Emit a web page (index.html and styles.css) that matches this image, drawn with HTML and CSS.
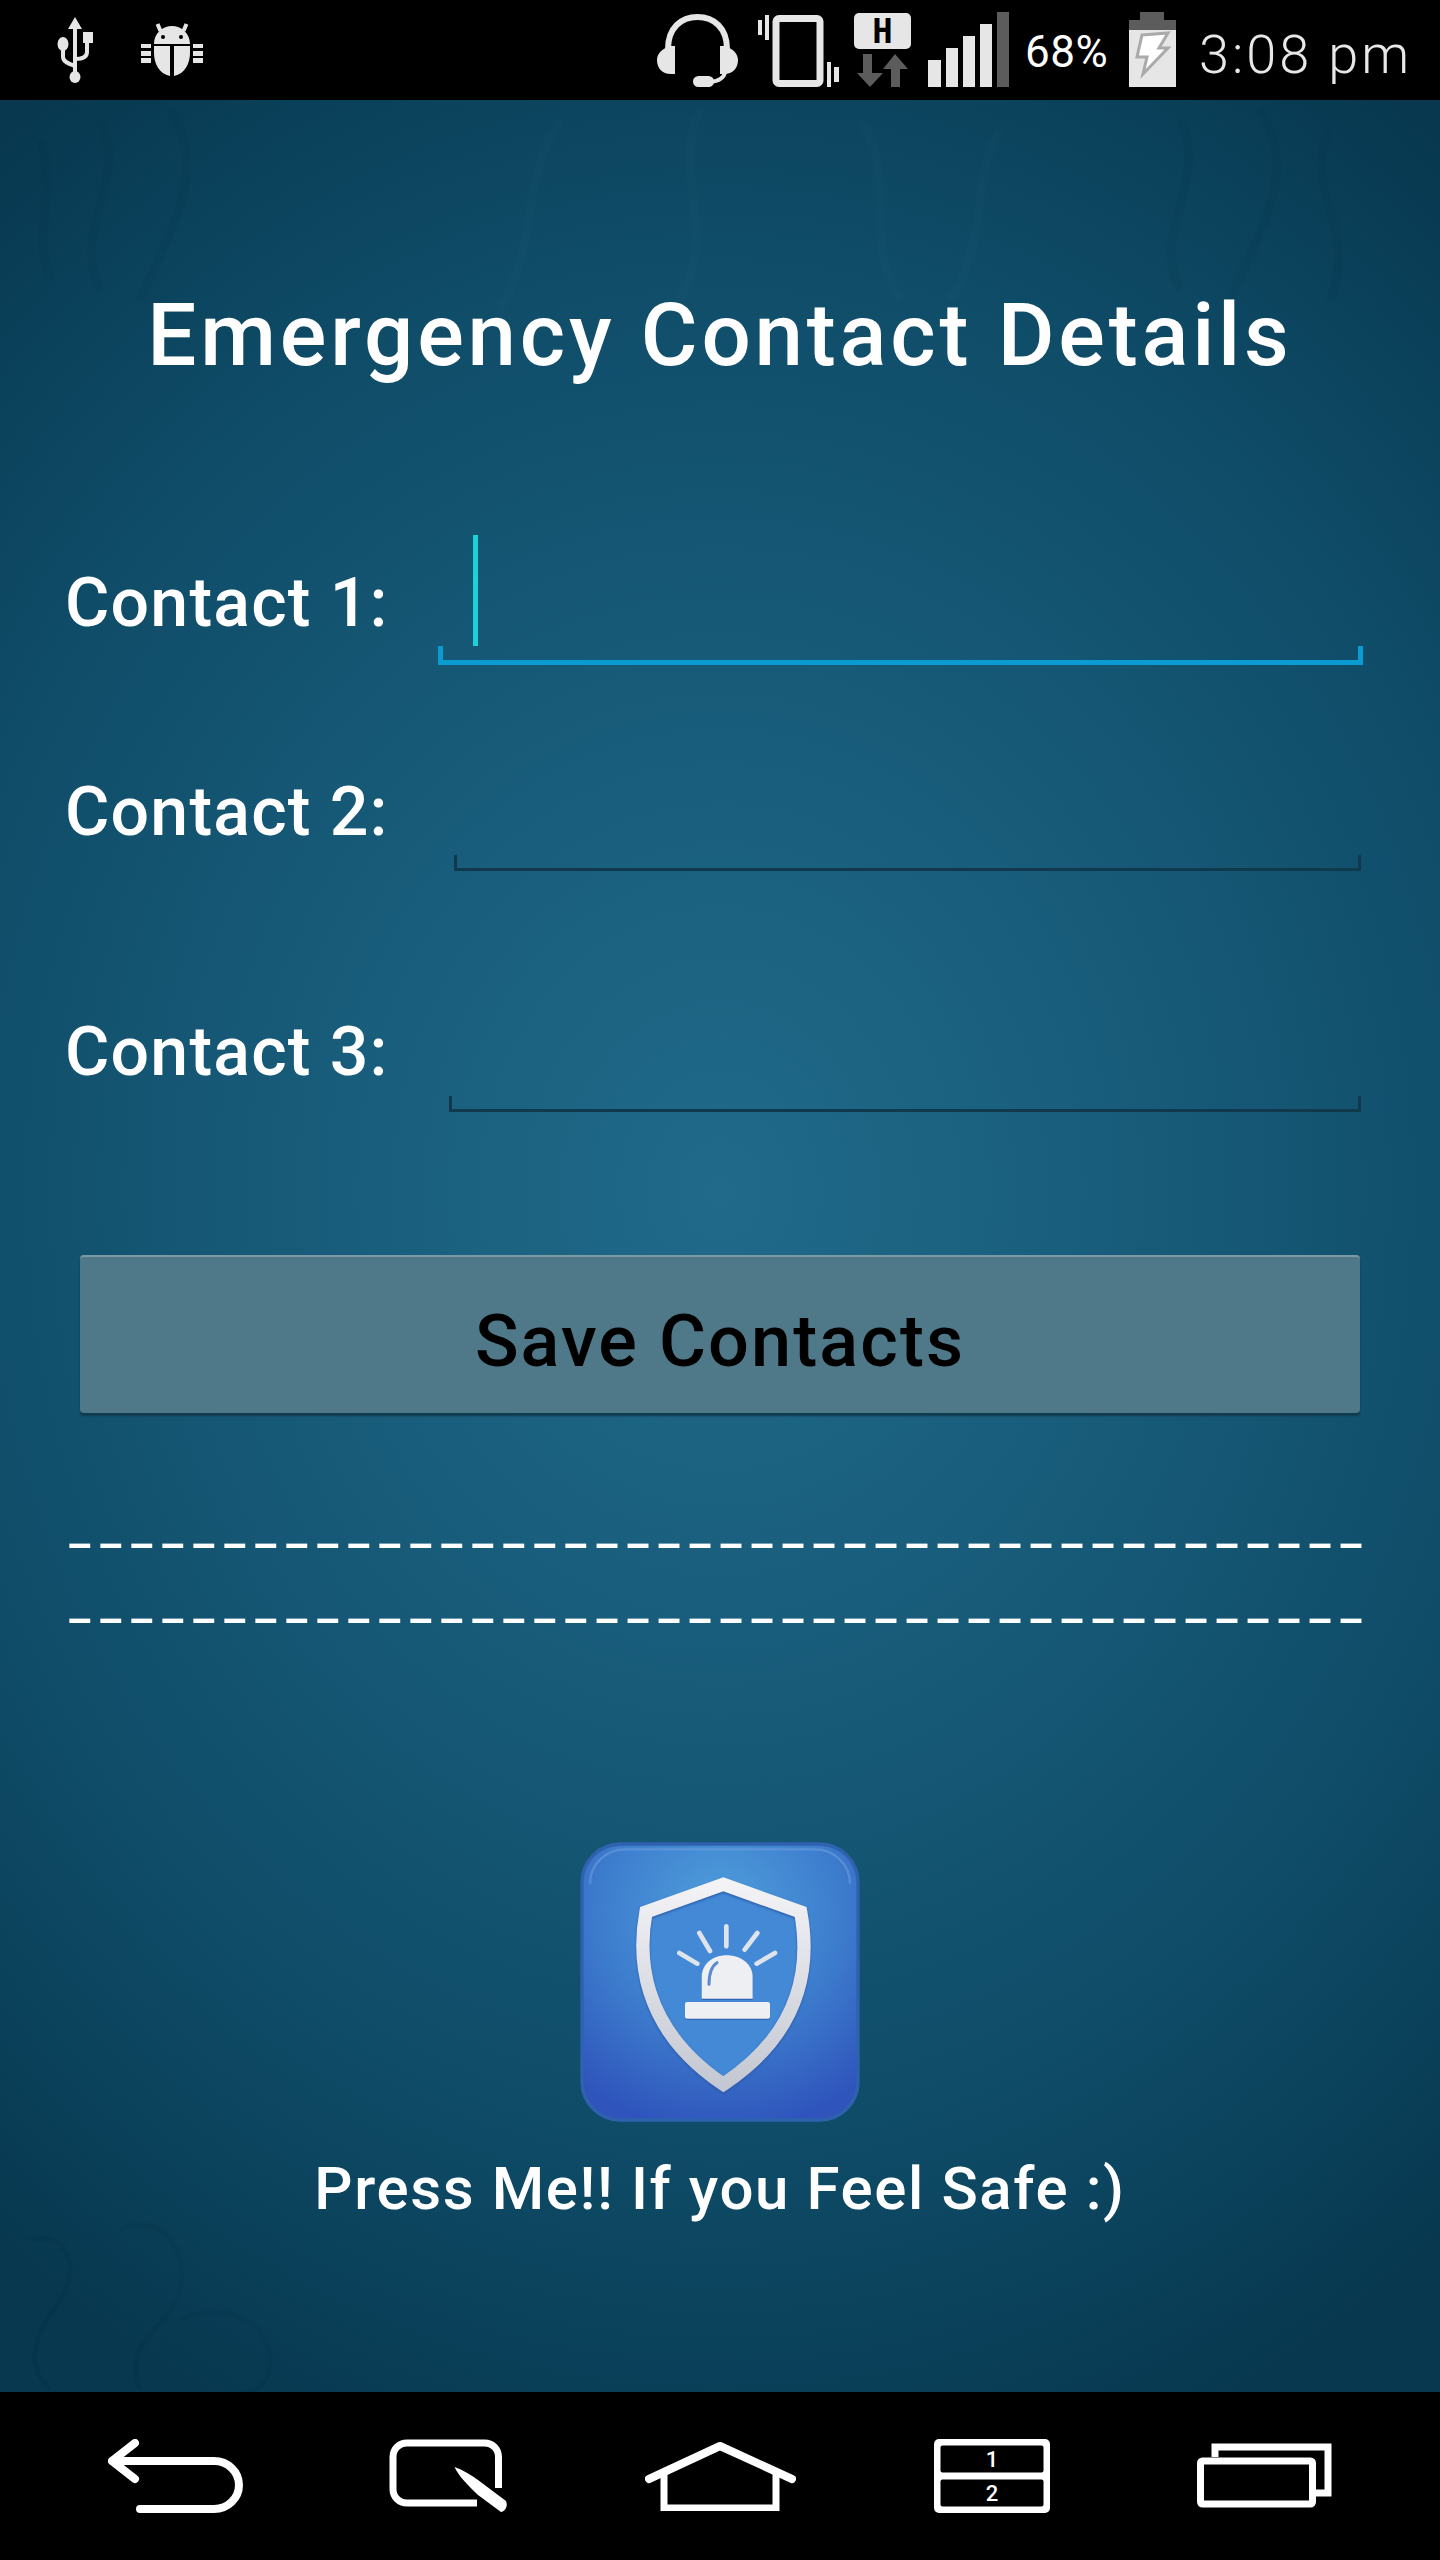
FILE: index.html
```html
<!DOCTYPE html>
<html lang="en">
<head>
<meta charset="utf-8">
<title>Emergency Contact Details</title>
<link rel="stylesheet" href="styles.css">
</head>
<body>
<div class="phone">
  <header class="status">
    <svg class="usb" viewBox="0 0 36 66"><path class="fill-l" d="M18 0l7 12h-5v44h-4V12h-5z"/><ellipse class="fill-l" cx="18" cy="60" rx="5.5" ry="6"/><ellipse class="fill-l" cx="6" cy="27" rx="5.5" ry="7"/><rect class="fill-l" x="26" y="15" width="10" height="11"/><path class="line-l" d="M6 30v10c0 5 6 7 12 9M30 26v9c0 5-5 7-12 7"/></svg>
    <svg class="bug" viewBox="0 0 62 53"><path class="fill-l" d="M13 21C13 10 22 3 31 3s18 7 18 18zM13 23h16v30C18 51 13 40 13 30zM49 23H33v30c11-2 16-13 16-23zM0 21h10v4H0zM0 28h10v5H0zM0 35h10v5H0zM52 21h10v4H52zM52 28h10v5H52zM52 35h10v5H52z"/><path class="line-l" d="M16.500 1l3 7M45.500 1l-3 7"/><circle cx="22" cy="14" r="2"/><circle cx="40" cy="14" r="2"/></svg>
    <svg class="headset" viewBox="0 0 81 73"><path class="line-w" d="M11 35C11 14 24 3 40.500 3S70 14 70 35"/><path class="fill-l" d="M18 32h-4C5 34 0 40 0 46c0 8 5 14 14 14h4zM63 32h4c9 2 14 8 14 14 0 8-5 14-14 14h-4z"/><rect class="fill-l" x="36" y="62" width="21" height="11" rx="5.500"/><path class="line-l" d="M68 58c-1 6-6 9-14 10"/></svg>
    <svg class="vibrate" viewBox="0 0 81 72"><rect class="outline" x="18" y="3.500" width="44" height="65" rx="3"/><path class="fill-l" d="M0 5h4v15H0zM7 0h4v25H7zM69 47h4v25h-4zM76 52h5v15h-5z"/></svg>
    <svg class="network" viewBox="0 0 57 74"><rect class="fill-l" width="57" height="36" rx="5"/><text class="h-mark" x="28.500" y="30" text-anchor="middle">H</text><path class="fill-g" d="M9 41h9v19h11L16 74 3 60h6zM41 41l13 15H46v18h-9V56H29z"/></svg>
    <svg class="signal" viewBox="0 0 81 75"><path class="fill-l" d="M0 48h13v27H0zM18 36h12v39H18zM35 24h12v51H35zM52 12h12v63H52z"/><path class="fill-g" d="M69 0h12v75H69z"/></svg>
    <span class="pct">68%</span>
    <svg class="battery" viewBox="0 0 47 75"><path class="fill-g" d="M11 0h24v8h12v10H0V8h11z"/><path class="fill-l" d="M0 18h47v57H0z"/><path class="bolt" d="M13 23l26-2-9 15h9L14 62l4-17H8z"/></svg>
    <span class="clock">3:08 pm</span>
  </header>

  <main class="screen">
    <h1 class="title">Emergency Contact Details</h1>

    <div class="row row-one">
      <label class="label">Contact 1:</label>
      <div class="field field-active"><span class="cursor"></span></div>
    </div>
    <div class="row row-two">
      <label class="label">Contact 2:</label>
      <div class="field"></div>
    </div>
    <div class="row row-three">
      <label class="label">Contact 3:</label>
      <div class="field"></div>
    </div>

    <button class="save">Save Contacts</button>

    <p class="dashes dashes-first">------------------------------------------</p>
    <p class="dashes">------------------------------------------</p>

    <svg class="alarm" viewBox="60 65 840 840">
      <defs>
        <radialGradient id="tile" cx="50%" cy="24%" r="80%">
          <stop offset="0" stop-color="#4f9fdc"/>
          <stop offset=".55" stop-color="#3d7ccd"/>
          <stop offset="1" stop-color="#2f55bc"/>
        </radialGradient>
        <linearGradient id="rim" x1="0" y1="0" x2="0" y2="1">
          <stop offset="0" stop-color="#f3f3f6"/>
          <stop offset="1" stop-color="#c4c8d2"/>
        </linearGradient>
      </defs>
      <rect x="66" y="71" width="828" height="828" rx="115" fill="url(#tile)" stroke="#2f62ae" stroke-width="10"/>
      <path class="tile-edge" d="M90 190c0-60 50-103 105-103h570c55 0 105 43 105 103"/>
      <path class="shield-back" d="M490 192l232 83c23 125 28 345-232 517C235 620 235 400 258 275z"/>
      <path class="shield" d="M490 192l232 83c23 125 28 345-232 517C235 620 235 400 258 275z"/>
      <path class="rays" d="M499 318v60M418 338l32 54M592 338l-38 50M358 398l54 32M645 398l-55 32"/>
      <path class="lamp" d="M425 535v-65c0-40 35-65 75-65s78 25 78 65v65z"/>
      <rect class="lamp" x="375" y="545" width="255" height="50" rx="6"/>
      <path class="gleam" d="M447 492c0-35 8-55 24-65"/>
    </svg>
    <p class="caption">Press Me!! If you Feel Safe :)</p>
  </main>

  <nav class="nav">
    <svg class="back" viewBox="0 0 135 74"><path class="nav-line" d="M27 4L4 22l23 18M4 22h102c14 0 25 11 25 24s-11 24-25 24H32"/></svg>
    <svg class="menu" viewBox="0 0 118 74"><path class="nav-rect" d="M109.500 49V18c0-8-6-14-14-14H18C10 4 4 10 4 18v32c0 8 6 14 14 14h70"/><path class="nav-fill" d="M65.500 28C74 31 82 36 89 41l28 21c2 4 0 10-5 11L89 56C81 48 70 38 65.500 28z"/></svg>
    <svg class="home" viewBox="0 0 151 69"><path class="nav-line" d="M4 37L75 4l72 33"/><path class="nav-rect" d="M19 32v34h112V32"/></svg>
    <svg class="multi" viewBox="0 0 116 74"><rect class="nav-fill" width="116" height="74" rx="5"/><rect x="6.500" y="6.500" width="103" height="27" rx="2"/><rect x="6.500" y="40.500" width="103" height="27" rx="2"/><text class="multi-num" x="58" y="28" text-anchor="middle">1</text><text class="multi-num" x="58" y="62" text-anchor="middle">2</text></svg>
    <svg class="recents" viewBox="0 0 135 65"><path class="nav-rect" d="M18 14V4h113v46h-12"/><rect class="nav-rect" x="3.500" y="18" width="112" height="43" rx="2"/></svg>
  </nav>
</div>
</body>
</html>
```

FILE: styles.css
```css
* { box-sizing: border-box; }
html, body { margin: 0; padding: 0; background: #000; }
body { font-family: "Roboto", "Liberation Sans", sans-serif; }
.phone { width: 1440px; height: 2560px; display: flex; flex-direction: column; overflow: hidden; }

/* status bar */
.status { height: 100px; flex: none; background: #000; display: flex; align-items: flex-start; padding-left: 57px; }
.status svg { display: block; flex: none; overflow: visible; }
.usb { width: 36px; height: 66px; margin-top: 17px; }
.bug { width: 62px; height: 53px; margin-top: 23px; margin-left: 48px; }
.headset { width: 81px; height: 73px; margin-top: 14px; margin-left: 454px; }
.vibrate { width: 81px; height: 72px; margin-top: 15px; margin-left: 20px; }
.network { width: 57px; height: 74px; margin-top: 13px; margin-left: 15px; }
.signal { width: 81px; height: 75px; margin-top: 12px; margin-left: 17px; }
.battery { width: 47px; height: 75px; margin-top: 12px; margin-left: 17px; }
.pct { color: #fff; font-size: 44px; line-height: 50px; margin-top: 27px; margin-left: 16px; width: 87px; letter-spacing: .5px; white-space: nowrap; }
.clock { color: #e8e8e8; font-size: 54px; font-weight: 300; line-height: 64px; margin-top: 23px; margin-left: 23px; letter-spacing: 3px; white-space: nowrap; }
.fill-l { fill: #e6e6e6; }
.fill-g { fill: #5c5c5c; }
.line-l { fill: none; stroke: #e6e6e6; stroke-width: 4; }
.line-w { fill: none; stroke: #e6e6e6; stroke-width: 6; }
.outline { fill: none; stroke: #e6e6e6; stroke-width: 7; }
.bolt { fill: #fff; stroke: #aaa; stroke-width: 3; }
.h-mark { font-family: "DejaVu Sans Mono", monospace; font-weight: 700; font-size: 34px; fill: #000; }

/* main screen */
.screen {
  flex: 1;
  display: flex;
  flex-direction: column;
  background-color: #07384f;
  background-image:
    url("data:image/svg+xml,%3Csvg xmlns='http://www.w3.org/2000/svg' width='1440' height='260' fill='none' stroke='%23000' stroke-opacity='.03' stroke-width='9'%3E%3Cpath d='M100 20c30 60-30 110 0 170M170 10c40 60 0 120-30 190M1180 20c30 60-30 110 0 170M1260 10c40 60 0 120-30 190M1330 30c-30 60 30 100 0 170M40 40c20 50-10 90 10 140'/%3E%3Cpath stroke='%23fff' stroke-opacity='.012' d='M560 20c-40 60-20 120-60 190M700 10c-30 60 20 120-20 190M860 20c40 60 0 110 40 180M1000 30c-30 50-10 110-50 170'/%3E%3C/svg%3E"),
    url("data:image/svg+xml,%3Csvg xmlns='http://www.w3.org/2000/svg' width='320' height='200' fill='none' stroke='%23000' stroke-opacity='.04' stroke-width='5'%3E%3Cpath d='M30 40c40-10 50 30 30 60s-40 60-10 90M120 30c40-20 70 20 60 60s-60 50-40 100M180 120c40-20 90 0 90 40s-30 30-60 40'/%3E%3C/svg%3E"),
    radial-gradient(ellipse 1150px 1350px at 720px 1090px, #216a8a 0%, #175b79 38%, #0f4c68 70%, #07384f 100%);
  background-repeat: no-repeat;
  background-position: 0 0, 0 2100px, 0 0;
}
.title { margin: 185px 0 0; height: 100px; line-height: 100px; font-size: 87px; font-weight: 500; color: #fff; text-align: center; letter-spacing: 3.800px; white-space: nowrap; }
.row { display: flex; align-items: flex-start; padding-left: 65px; padding-right: 79px; }
.row-one { margin-top: 150px; height: 130px; padding-right: 77px; }
.row-two { margin-top: 107px; height: 99px; }
.row-three { margin-top: 141px; height: 100px; }
.label { flex: none; height: 80px; line-height: 80px; font-size: 68px; font-weight: 500; color: #fff; letter-spacing: 1.200px; white-space: nowrap; }
.row-one .label { width: 373px; margin-top: 28px; }
.row-two .label { width: 389px; }
.row-three .label { width: 384px; }
.field {
  flex: 1;
  height: 100%;
  background:
    linear-gradient(#10394e, #10394e) left bottom / 3px 16px no-repeat,
    linear-gradient(#10394e, #10394e) right bottom / 3px 16px no-repeat,
    linear-gradient(#10394e, #10394e) left bottom / 100% 3px no-repeat;
}
.field-active {
  background:
    linear-gradient(#0a9bd2, #0a9bd2) left bottom / 5px 19px no-repeat,
    linear-gradient(#0a9bd2, #0a9bd2) right bottom / 5px 19px no-repeat,
    linear-gradient(#0a9bd2, #0a9bd2) left bottom / 100% 5px no-repeat;
}
.cursor { display: block; width: 5px; height: 111px; margin-left: 35px; background: #1ad2d8; }

.save { display: block; margin: 143px 80px 0; height: 158px; width: 1280px; flex: none; padding: 12px 0 0; border: 0; border-top: 2px solid #7a9aa6; border-radius: 4px; background: #4f7888; box-shadow: 0 3px 2px #123a4e; color: #000; font-family: inherit; font-size: 72px; font-weight: 500; letter-spacing: 2.100px; }

.dashes { margin: 0 0 0 57px; width: 1320px; height: 75px; line-height: 75px; color: #fff; font-family: "Liberation Mono", monospace; font-size: 76px; letter-spacing: -14.600px; white-space: nowrap; transform: scaleY(.72); }
.dashes-first { margin-top: 96px; }

.alarm { display: block; flex: none; width: 280px; height: 280px; margin: 183px auto 0; }
.tile-edge { fill: none; stroke: #6b9ede; stroke-width: 7; opacity: .6; }
.shield-back { fill: #4389d6; stroke: none; }
.shield { fill: none; stroke: url(#rim); stroke-width: 40; stroke-linejoin: miter; filter: drop-shadow(0 4px 3px #2a5aa8); }
.rays { fill: none; stroke: #dfe3ea; stroke-width: 14; stroke-linecap: round; }
.lamp { fill: #eeeff3; filter: drop-shadow(0 3px 2px #2a5aa8); }
.gleam { fill: none; stroke: #5a8dcb; stroke-width: 9; stroke-linecap: round; }
.caption { margin: 27px 0 0; height: 80px; line-height: 80px; text-align: center; color: #fff; font-size: 60px; font-weight: 500; letter-spacing: 1.600px; white-space: nowrap; }

/* nav bar */
.nav { height: 168px; flex: none; background: #000; display: flex; align-items: flex-start; padding-left: 108px; }
.nav svg { display: block; flex: none; }
.back { width: 135px; height: 74px; margin-top: 47px; }
.menu { width: 118px; height: 74px; margin-top: 47px; margin-left: 146px; }
.home { width: 151px; height: 69px; margin-top: 50px; margin-left: 138px; }
.multi { width: 116px; height: 74px; margin-top: 47px; margin-left: 138px; }
.recents { width: 135px; height: 65px; margin-top: 51px; margin-left: 147px; }
.nav-line { fill: none; stroke: #fff; stroke-width: 8; stroke-linecap: round; stroke-linejoin: round; }
.nav-rect { fill: none; stroke: #fff; stroke-width: 7; }
.nav-fill { fill: #fff; }
.multi-num { font-family: "Roboto", "Liberation Sans", sans-serif; font-size: 22px; font-weight: 500; fill: #fff; }
```
